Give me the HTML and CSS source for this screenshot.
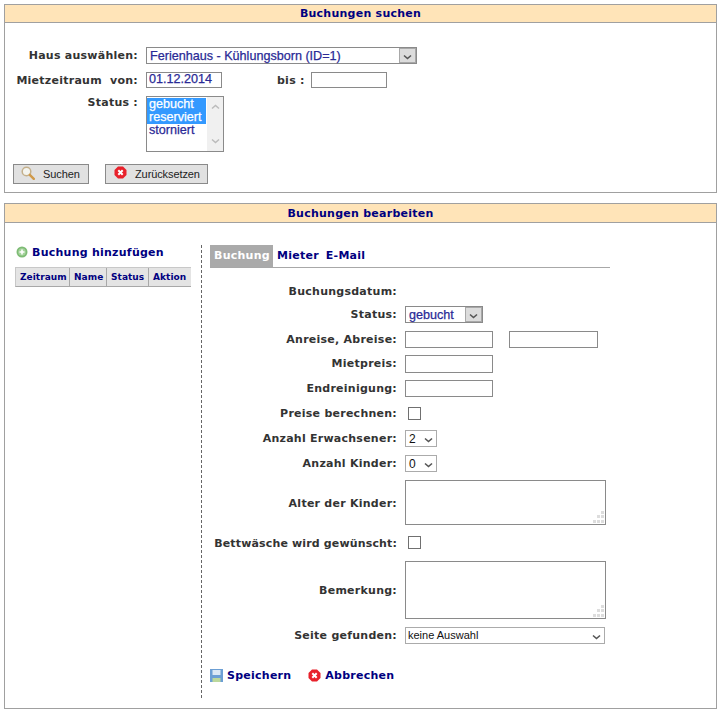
FILE: index.html
```html
<!DOCTYPE html>
<html lang="de">
<head>
<meta charset="utf-8">
<title>Buchungen</title>
<link rel="stylesheet" href="styles.css">
</head>
<body>
<section class="panel panel-search">
  <h2 class="panel-head">Buchungen suchen</h2>
  <form class="search-form">
    <div class="s-row s-row-haus">
      <label class="s-label">Haus auswählen:</label>
      <div class="sel sel-haus"><span class="sel-text">Ferienhaus - Kühlungsborn (ID=1)</span><span class="sel-btn"><svg width="9" height="6" viewBox="0 0 9 6"><path d="M1 1.500l3.500 3 3.500-3" fill="none" stroke="#555" stroke-width="1.600"/></svg></span></div>
    </div>
    <div class="s-row s-row-date">
      <label class="s-label">Mietzeitraum&nbsp; von:</label>
      <input class="inp inp-date" value="01.12.2014">
      <label class="s-bis">bis :</label>
      <input class="inp inp-date">
    </div>
    <div class="s-row s-row-status">
      <label class="s-label">Status :</label>
      <div class="listbox">
        <div class="opts"><div class="opt on">gebucht</div><div class="opt on">reserviert</div><div class="opt">storniert</div></div>
        <div class="scroll">
          <svg width="9" height="6" viewBox="0 0 9 6"><path d="M1 4.500l3.500-3 3.500 3" fill="none" stroke="#bbb" stroke-width="1.500"/></svg>
          <svg width="9" height="6" viewBox="0 0 9 6"><path d="M1 1.500l3.500 3 3.500-3" fill="none" stroke="#bbb" stroke-width="1.500"/></svg>
        </div>
      </div>
    </div>
    <div class="s-actions">
      <button type="button" class="btn btn-search"><svg class="ico" width="14" height="14" viewBox="0 0 14 14"><circle cx="5.500" cy="5.500" r="4.300" fill="#f4f4ee" stroke="#c4b08c" stroke-width="1.500"/><path d="M8.800 8.800l4 4" stroke="#d09a4a" stroke-width="2.400" stroke-linecap="round"/></svg><span>Suchen</span></button>
      <button type="button" class="btn btn-reset"><svg class="ico" width="13" height="13" viewBox="0 0 13 13"><path d="M4 .5h5L12.500 4v5L9 12.500H4L.5 9V4z" fill="#e8212b"/><path d="M4.300 4.300l4.400 4.400M8.700 4.300l-4.400 4.400" stroke="#fff" stroke-width="2"/></svg><span>Zurücksetzen</span></button>
    </div>
  </form>
</section>

<section class="panel panel-edit">
  <h2 class="panel-head">Buchungen bearbeiten</h2>
  <div class="edit-body">
    <aside class="side">
      <a class="add-link"><svg width="12" height="12" viewBox="0 0 12 12"><circle cx="6" cy="6" r="5.500" fill="#7dbb74"/><circle cx="6" cy="6" r="3.800" fill="#a5d39c"/><path d="M6 3.500v5M3.500 6h5" stroke="#fff" stroke-width="1.600"/></svg>Buchung hinzufügen</a>
      <div class="tbl-head"><span class="th th-1">Zeitraum</span><span class="th th-2">Name</span><span class="th th-3">Status</span><span class="th th-4">Aktion</span></div>
    </aside>
    <div class="main">
      <nav class="tabs"><a class="tab active">Buchung</a><a class="tab tab-m">Mieter</a><a class="tab tab-e">E-Mail</a></nav>
      <form class="grid">
        <label class="g-label">Buchungsdatum:</label><div></div>
        <label class="g-label">Status:</label>
        <div class="sel sel-status"><span class="sel-text">gebucht</span><span class="sel-btn"><svg width="9" height="6" viewBox="0 0 9 6"><path d="M1 1.500l3.500 3 3.500-3" fill="none" stroke="#555" stroke-width="1.600"/></svg></span></div>
        <label class="g-label">Anreise, Abreise:</label>
        <div class="pair"><input class="inp inp-wide"><input class="inp inp-wide2"></div>
        <label class="g-label">Mietpreis:</label><div><input class="inp inp-wide inp-tall"></div>
        <label class="g-label">Endreinigung:</label><div><input class="inp inp-wide"></div>
        <label class="g-label">Preise berechnen:</label><div><span class="cb"></span></div>
        <label class="g-label">Anzahl Erwachsener:</label>
        <div class="num"><span class="num-val">2</span><svg width="9" height="6" viewBox="0 0 9 6"><path d="M1 1.500l3.500 3 3.500-3" fill="none" stroke="#555" stroke-width="1.600"/></svg></div>
        <label class="g-label">Anzahl Kinder:</label>
        <div class="num"><span class="num-val">0</span><svg width="9" height="6" viewBox="0 0 9 6"><path d="M1 1.500l3.500 3 3.500-3" fill="none" stroke="#555" stroke-width="1.600"/></svg></div>
        <label class="g-label g-low">Alter der Kinder:</label>
        <div class="ta ta-alter"><svg class="grip" width="13" height="13" viewBox="0 0 13 13"><path d="M9 0h3v3H9zM5 4h3v3H5zM9 4h3v3H9zM1 9h3v3H1zM5 9h3v3H5zM9 9h3v3H9z" fill="#ddd"/></svg></div>
        <label class="g-label g-low g-bett">Bettwäsche wird gewünscht:</label><div><span class="cb"></span></div>
        <label class="g-label">Bemerkung:</label>
        <div class="ta ta-bem"><svg class="grip" width="13" height="13" viewBox="0 0 13 13"><path d="M9 0h3v3H9zM5 4h3v3H5zM9 4h3v3H9zM1 9h3v3H1zM5 9h3v3H5zM9 9h3v3H9z" fill="#ddd"/></svg></div>
        <label class="g-label">Seite gefunden:</label>
        <div class="num num-wide"><span class="num-txt">keine Auswahl</span><svg width="9" height="6" viewBox="0 0 9 6"><path d="M1 1.500l3.500 3 3.500-3" fill="none" stroke="#555" stroke-width="1.600"/></svg></div>
      </form>
      <div class="form-actions">
        <a class="act act-save"><svg width="13" height="13" viewBox="0 0 13 13"><path d="M0 0h13v13H0z" fill="#6c9fd4"/><path d="M2.500 1h8v5h-8z" fill="#dbe8f5"/><path d="M2.500 9h8v4h-8z" fill="#bcd89c"/></svg>Speichern</a>
        <a class="act"><svg width="13" height="13" viewBox="0 0 13 13"><path d="M4 .5h5L12.500 4v5L9 12.500H4L.5 9V4z" fill="#e8212b"/><path d="M4.300 4.300l4.400 4.400M8.700 4.300l-4.400 4.400" stroke="#fff" stroke-width="2"/></svg>Abbrechen</a>
      </div>
    </div>
  </div>
</section>
</body>
</html>
```
FILE: styles.css
```css
* { box-sizing: border-box; }
body {
  margin: 0;
  padding: 4px 6px 4px 4px;
  background: #fff;
  font: bold 11px "DejaVu Sans", Verdana, sans-serif;
  letter-spacing: .25px;
  color: #333;
}
.panel { border: 1px solid #a0a0a0; }
.panel-search { height: 189px; }
.panel-edit { height: 506px; margin-top: 10px; }
.panel-head {
  margin: 0;
  height: 18px;
  line-height: 17px;
  font-size: 11px;
  font-weight: bold;
  text-align: center;
  color: #000080;
  background: #ffe4b8;
  border-bottom: 1px solid #a0a0a0;
}
.panel-edit .panel-head { height: 19px; line-height: 19px; }

.inp {
  display: block;
  padding: 0 2px;
  height: 17px;
  border: 1px solid #8a8a8a;
  background: #fff;
  font: 12.600px "Liberation Sans", Arial, sans-serif;
  letter-spacing: 0;
  -webkit-text-stroke: .25px #2a2a96;
  color: #2a2a96;
  outline: none;
}
.search-form { padding: 24px 0 0 8px; }
.s-row { display: flex; }
.s-label { width: 125px; margin-right: 8px; text-align: right; line-height: 17px; white-space: nowrap; }
.s-row-date { margin-top: 8px; height: 16px; }
.s-row-status { margin-top: 8px; }
.s-row-status .s-label { line-height: 14px; }
.inp-date { width: 76px; height: 16px; line-height: 12px; padding-bottom: 2px; }
.s-bis { width: 89px; padding-left: 55px; line-height: 17px; white-space: nowrap; }

.sel {
  display: flex;
  align-items: center;
  height: 17px;
  border: 1px solid #8a8a8a;
  font: 12.600px "Liberation Sans", Arial, sans-serif;
  letter-spacing: 0;
  -webkit-text-stroke: .25px #2a2a96;
  color: #2a2a96;
}
.sel-text { flex: 1; padding-left: 3px; line-height: 14px; white-space: nowrap; }
.sel-btn {
  display: flex;
  align-items: center;
  justify-content: center;
  width: 17px;
  height: 15px;
  background: #dcdcdc;
  border: 1px solid #a8a8a8;
}
.sel-btn svg { margin-top: 2px; }
.sel-haus { width: 271px; }
.sel-status { width: 78px; }

.listbox {
  display: flex;
  width: 78px;
  height: 56px;
  border: 1px solid #8a8a8a;
  font: 12.600px/13px "Liberation Sans", Arial, sans-serif;
  letter-spacing: 0;
  -webkit-text-stroke: .25px #2a2a96;
  color: #2a2a96;
  padding: 1px 0 0 0;
}
.opts { width: 59px; margin-right: 1px; }
.opt { padding-left: 2px; height: 13px; }
.opt.on { background: #3399ff; color: #fff; -webkit-text-stroke: .25px #fff; }
.scroll {
  flex: 1;
  margin-top: -1px;
  padding: 7px 0 7px;
  background: #f0f0f0;
  display: flex;
  flex-direction: column;
  justify-content: space-between;
  align-items: center;
}
.s-actions { display: flex; gap: 16px; margin-top: 12px; margin-left: 0; }
.btn {
  display: flex;
  align-items: center;
  height: 20px;
  padding: 0;
  border: 1px solid #8a8a8a;
  background: #e1e1e1;
  font: 11px "Liberation Sans", Arial, sans-serif;
  letter-spacing: -.1px;
  color: #222;
}
.btn .ico { margin-top: -3px; }
.btn-search { width: 76px; padding-left: 7px; }
.btn-search span { margin-left: 8px; }
.btn-reset { width: 103px; padding-left: 8px; }
.btn-reset span { margin-left: 8px; }

.edit-body { display: flex; padding-top: 22px; }
.side { width: 196px; padding: 0 0 0 10px; margin-right: 0; }
.add-link {
  display: flex;
  align-items: center;
  gap: 4px;
  padding-left: 1px;
  height: 14px;
  color: #000080;
}
.tbl-head {
  display: flex;
  margin-top: 8px;
  width: 176px;
  height: 20px;
  background: #e4e4e4;
  border-top: 1px solid #c8c8c8;
  border-bottom: 1px solid #a8a8a8;
  border-left: 1px solid #c8c8c8;
  font-size: 9px;
  letter-spacing: .05px;
  color: #000080;
}
.th { line-height: 19px; padding-left: 4px; border-right: 1px solid #a8a8a8; white-space: nowrap; }
.th-1 { width: 54px; }
.th-2 { width: 37px; }
.th-3 { width: 42px; }
.th-4 { border-right: 0; flex: 1; }

.main {
  width: 411px;
  height: 453px;
  border-left: 1px dashed #666;
  padding-left: 8px;
}
.tabs {
  display: flex;
  width: 400px;
  height: 23px;
  border-bottom: 1px solid #a8a8a8;
  color: #000080;
}
.tab { padding: 0 4px; line-height: 22px; }
.tab.active { background: #aaa; color: #fff; width: 63px; white-space: nowrap; }
.tab-e { padding-left: 3px; }
.grid {
  display: grid;
  grid-template-columns: 187px 1fr;
  grid-template-rows: 22px 25px 24px 25px 24px 27px 23px 27px 51px 29px 66px 25px;
  column-gap: 8px;
  align-items: center;
  margin-top: 12px;
}
.g-label { text-align: right; white-space: nowrap; }
.g-low { padding-top: 2px; }
.g-bett { letter-spacing: .15px; }
.pair { display: flex; gap: 16px; }
.inp-wide { width: 88px; }
.inp-wide2 { width: 89px; }
.inp-tall { height: 18px; }
.cb { display: block; width: 13px; height: 13px; margin-left: 3px; border: 1px solid #707070; background: #fff; }
.num {
  display: flex;
  justify-content: space-between;
  align-items: center;
  width: 32px;
  height: 17px;
  padding: 0 3px 0 2px;
  border: 1px solid #ababab;
  font: 11px "Liberation Sans", Arial, sans-serif;
  letter-spacing: 0;
  color: #111;
}
.num-val { font-size: 12px; padding-left: 1px; }
.num-txt { margin-top: -2px; }
.num svg { margin-top: 3px; }
.num-wide { width: 200px; }
.ta { position: relative; width: 201px; border: 1px solid #8a8a8a; background: #fff; }
.ta-alter { height: 45px; }
.ta-bem { height: 58px; }
.grip { position: absolute; right: 0; bottom: 0; }
.form-actions { display: flex; gap: 17px; margin-top: 20px; color: #000080; }
.act { display: flex; align-items: center; gap: 4px; height: 14px; }
```
